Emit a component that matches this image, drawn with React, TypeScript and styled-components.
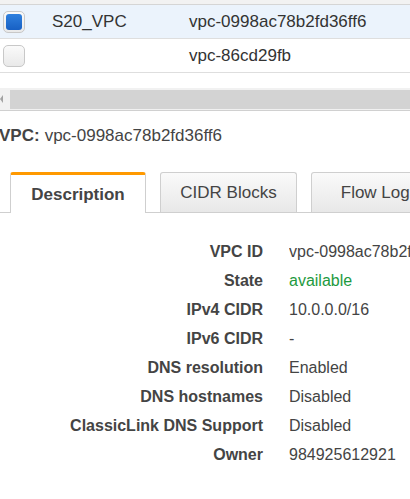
import React from "react";
import styled, { createGlobalStyle } from "styled-components";

const GlobalStyle = createGlobalStyle`
  html, body {
    margin: 0;
    padding: 0;
    background: #fff;
    overflow: hidden;
  }
  body {
    font-family: "Liberation Sans", Arial, sans-serif;
    color: #444;
  }
`;

const Page = styled.div`
  width: 410px;
  height: 499px;
  overflow: hidden;
  white-space: nowrap;
`;

const TableTop = styled.div`
  height: 4px;
  background: #f2f2f2;
  border-bottom: 1px solid #d5d5d5;
`;

const Row = styled.div<{ $selected?: boolean }>`
  display: grid;
  grid-template-columns: 52px 137px 1fr;
  align-items: center;
  height: 33px;
  font-size: 17px;
  color: #333;
  background: ${(p) => (p.$selected ? "#ebf3fc" : "#fff")};
  border-bottom: 1px solid #dedede;
`;

const Checkbox = styled.span<{ $checked?: boolean }>`
  box-sizing: border-box;
  margin-left: 3px;
  width: 22px;
  height: 22px;
  border: 1px solid #c8c8c8;
  border-radius: 5px;
  background: linear-gradient(#fafafa, #e9e9e9);
  display: flex;
  align-items: center;
  justify-content: center;

  &::after {
    content: "";
    display: ${(p) => (p.$checked ? "block" : "none")};
    width: 16px;
    height: 16px;
    border-radius: 3px;
    background: linear-gradient(#2f80de, #1760c4);
  }
`;

const ScrollTrack = styled.div`
  margin-top: 15px;
  height: 22px;
  background: #f1f1f1;
  display: flex;
  align-items: center;
  border-bottom: 1px solid #d0d0d0;
`;

const ScrollArrow = styled.span`
  width: 10px;
  display: flex;
  align-items: center;

  &::before {
    content: "";
    width: 0;
    height: 0;
    border-top: 4px solid transparent;
    border-bottom: 4px solid transparent;
    border-right: 3px solid #a3a3a3;
  }
`;

const ScrollThumb = styled.span`
  flex: 1;
  height: 19px;
  background: #d3d3d3;
`;

const Heading = styled.div`
  margin-top: 15px;
  font-size: 17px;
  line-height: 20px;
  color: #444;

  b {
    margin-left: -1px;
    margin-right: 5px;
  }
`;

const TabBar = styled.div`
  margin-top: 26px;
  height: 40px;
  display: flex;
  align-items: flex-end;
  gap: 14px;
  padding-left: 10px;
  border-bottom: 1px solid #cfcfcf;
`;

const Tab = styled.div<{ $active?: boolean }>`
  box-sizing: border-box;
  flex: 0 0 ${(p) => (p.$active ? "136px" : "137px")};
  height: ${(p) => (p.$active ? "41px" : "40px")};
  margin-bottom: ${(p) => (p.$active ? "-1px" : "0")};
  display: flex;
  align-items: center;
  justify-content: center;
  font-size: 17px;
  font-weight: ${(p) => (p.$active ? "bold" : "normal")};
  color: #444;
  border: 1px solid #cfcfcf;
  border-bottom: none;
  border-top: ${(p) => (p.$active ? "3px solid #ff9900" : "1px solid #cfcfcf")};
  border-radius: 3px 3px 0 0;
  background: ${(p) =>
    p.$active ? "#fff" : "linear-gradient(#fafafa, #e8e8e8)"};
  padding-top: ${(p) => (p.$active ? "1px" : "0")};
`;

const Details = styled.div`
  display: grid;
  grid-template-columns: 263px 1fr;
  column-gap: 26px;
  padding-top: 24px;
  font-size: 16px;
  line-height: 29px;
`;

const Label = styled.div`
  text-align: right;
  font-weight: bold;
  color: #444;
`;

const Value = styled.div<{ $tone?: "ok" }>`
  color: ${(p) => (p.$tone === "ok" ? "#1d9a3e" : "#444")};
  overflow: hidden;
`;

const details: { label: string; value: string; tone?: "ok" }[] = [
  { label: "VPC ID", value: "vpc-0998ac78b2fd36ff6" },
  { label: "State", value: "available", tone: "ok" },
  { label: "IPv4 CIDR", value: "10.0.0.0/16" },
  { label: "IPv6 CIDR", value: "-" },
  { label: "DNS resolution", value: "Enabled" },
  { label: "DNS hostnames", value: "Disabled" },
  { label: "ClassicLink DNS Support", value: "Disabled" },
  { label: "Owner", value: "984925612921" },
];

export default function App() {
  return (
    <Page>
      <GlobalStyle />
      <TableTop />
      <Row $selected>
        <Checkbox $checked />
        <span>S20_VPC</span>
        <span>vpc-0998ac78b2fd36ff6</span>
      </Row>
      <Row>
        <Checkbox />
        <span />
        <span>vpc-86cd29fb</span>
      </Row>
      <ScrollTrack>
        <ScrollArrow />
        <ScrollThumb />
      </ScrollTrack>
      <Heading>
        <b>VPC:</b>vpc-0998ac78b2fd36ff6
      </Heading>
      <TabBar>
        <Tab $active>Description</Tab>
        <Tab>CIDR Blocks</Tab>
        <Tab>Flow Logs</Tab>
      </TabBar>
      <Details>
        {details.map((d) => (
          <React.Fragment key={d.label}>
            <Label>{d.label}</Label>
            <Value $tone={d.tone}>{d.value}</Value>
          </React.Fragment>
        ))}
      </Details>
    </Page>
  );
}
